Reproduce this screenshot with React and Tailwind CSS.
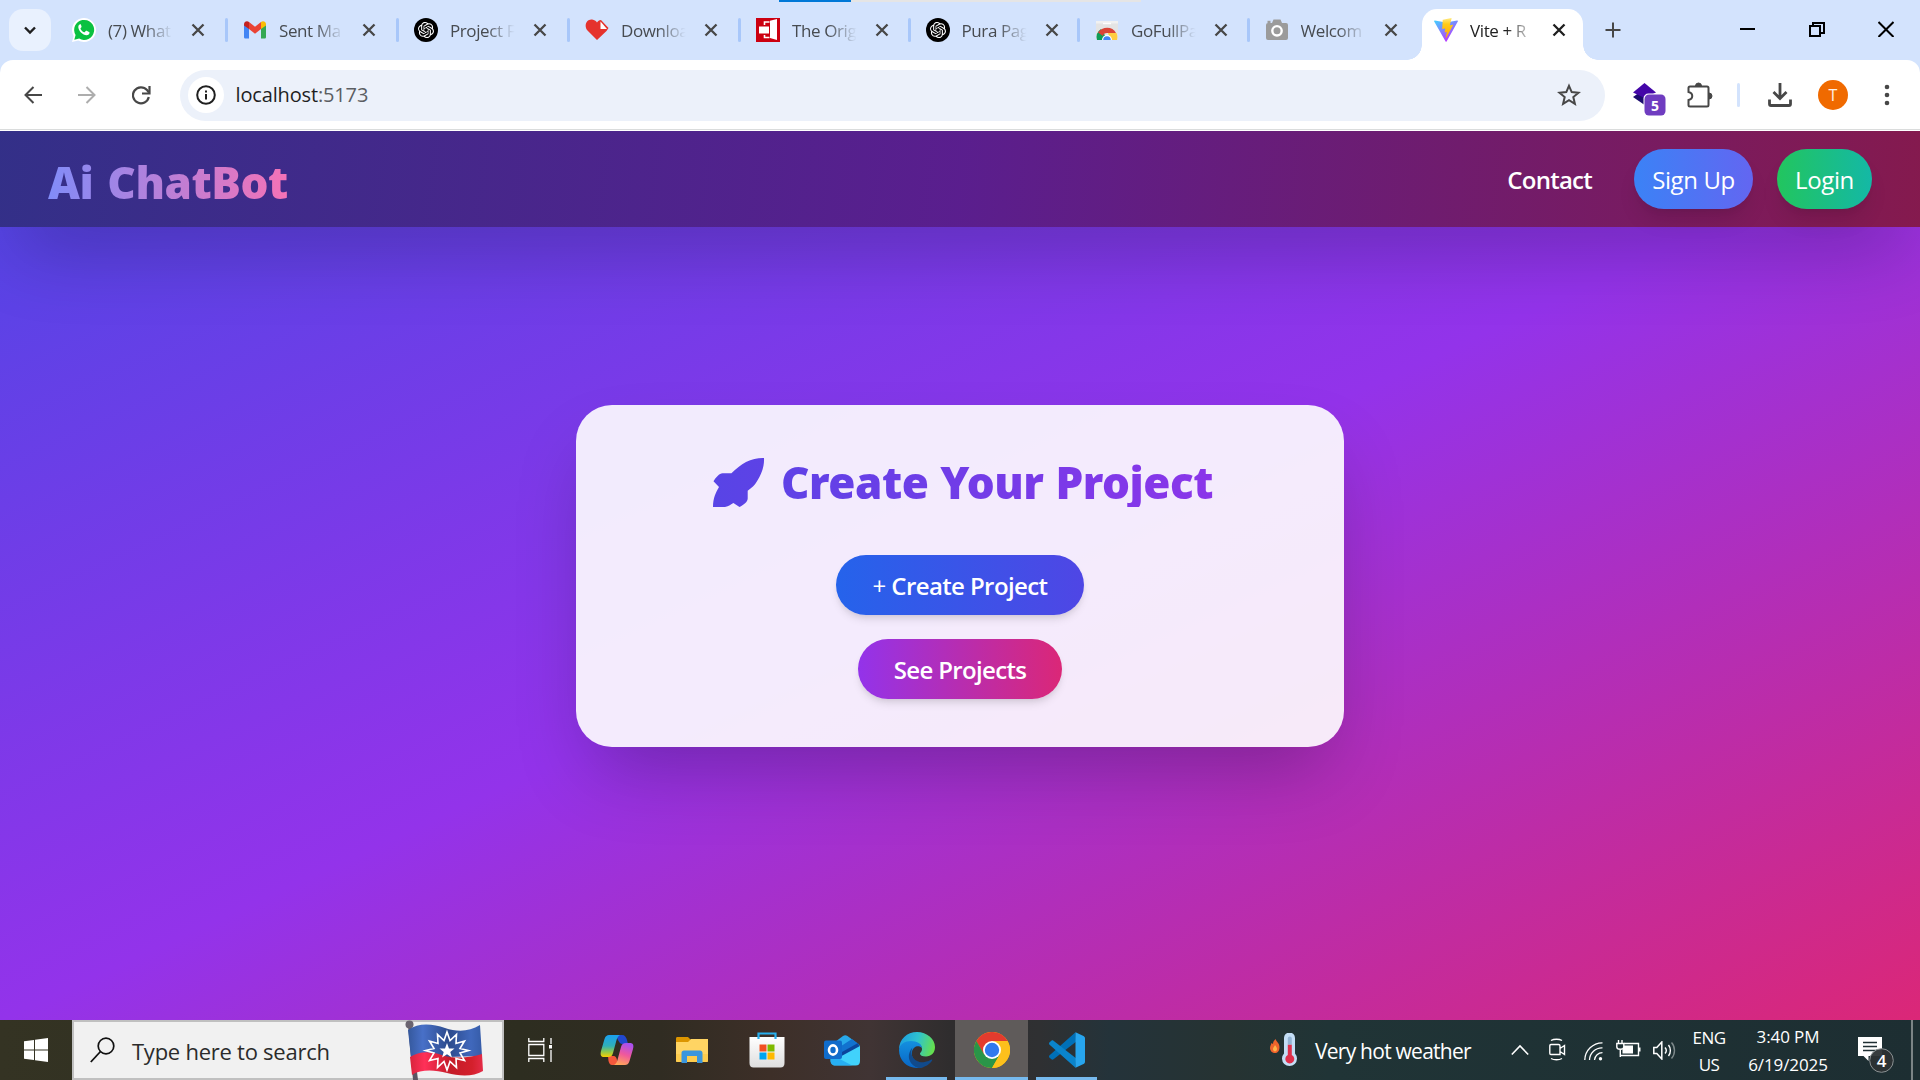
import React from "react";
import { SiOpenai } from "react-icons/si";

const WhatsApp = () => (
  <svg className="size-6" viewBox="0 0 24 24">
    <path d="M0 24l1.6-6A12 12 0 1 1 6.200 22.500z" fill="#fff" />
    <path d="M2.300 21.700l1.300-4.600A10 10 0 1 1 7.200 20.600z" fill="#0ac141" />
    <path d="M8.200 6.200c-.7 0-1.900 1-1.900 2.700 0 3.500 4.300 8.300 8.300 8.300 1.700 0 2.900-1.100 2.900-2.400 0-.5-.1-.7-.5-.9l-2.300-1.100c-.4-.2-.7-.1-1 .3l-.8 1c-.3.3-.6.3-.9.1-1.500-.7-2.700-1.900-3.400-3.300-.2-.3-.1-.6.1-.8l.7-.9c.2-.3.2-.5.1-.8L8.900 6.600c-.2-.4-.4-.4-.7-.4z" fill="#fff" />
  </svg>
);
const Gmail = () => (
  <svg className="size-6" viewBox="0 0 24 24">
    <path d="M1 6v13c0 1 .6 1.600 1.600 1.600H6V10z" fill="#4285f4" />
    <path d="M23 6v13c0 1-.6 1.600-1.600 1.600H18V10z" fill="#34a853" />
    <path d="M1 6.500C1 3.500 4 2.500 6 4v7L1 7.500z" fill="#c5221f" />
    <path d="M23 6.500C23 3.500 20 2.500 18 4v7l5-3.500z" fill="#fbbc04" />
    <path d="M6 4l6 4.800L18 4v7l-6 4.700L6 11z" fill="#ea4335" />
  </svg>
);
const ChatGpt = () => (
  <span className="flex size-6 items-center justify-center rounded-full bg-black text-white">
    <SiOpenai size={16} />
  </span>
);
const Heart = () => (
  <svg className="size-6" viewBox="0 0 24 24">
    <path d="M12 22L2.500 12.500C-2 7 2.500 0 8 1.800 10 2.300 11 3.300 12 4.500c1-1.500 2-2.300 4-2.500l7.500 8-2 3z" fill="#e5322d" />
    <path d="M15.500 3.500v7.500h6.500z" fill="#fff" />
  </svg>
);
const Door = () => (
  <svg className="size-6" viewBox="0 0 24 24">
    <path d="M0 0h24v24H0z" fill="#cc0010" />
    <path d="M14 2.800l7-1.800v21l-7-2z" fill="#fff" />
    <path d="M3 8.500h10v7H3z" fill="#fff" />
    <path d="M8.500 7V4h5M8.500 17v2.500h5" fill="none" stroke="#fff" strokeWidth="1.600" />
  </svg>
);
const WebStore = () => (
  <svg className="size-6" viewBox="0 0 24 24">
    <path d="M1 3h22v19H1z" fill="#e4e4e4" />
    <path d="M1 3h22v2.500H1z" fill="#f1f1f1" />
    <path d="M8 5.500h8" stroke="#fff" strokeWidth="1.500" />
    <path d="M2 22a10 10 0 0 1 4-11l5 8-3 3z" fill="#0f9d58" />
    <path d="M3 14.500C7 8 18 8 21 15H12c-2 0-4 1-4 3z" fill="#db4437" />
    <path d="M13 15h8.500c1 2 1 5 .5 7h-7z" fill="#ffcd40" />
    <path d="M7 22a5 5 0 0 1 10 0z" fill="#fff" />
    <path d="M8.200 22a3.800 3.800 0 0 1 7.600 0z" fill="#4285f4" />
  </svg>
);
const Camera = () => (
  <svg className="size-6" viewBox="0 0 24 24">
    <path d="M3 5h4l1.500-3.500h7L17 5h4a2 2 0 0 1 2 2v13a2 2 0 0 1-2 2H3a2 2 0 0 1-2-2V7a2 2 0 0 1 2-2z" fill="#9b9b9b" />
    <path d="M2.500 2.800h3V5h-3z" fill="#9b9b9b" />
    <circle cx="12" cy="12.800" r="4.700" fill="none" stroke="#fff" strokeWidth="2.400" />
  </svg>
);
const Vite = () => (
  <svg className="size-6" viewBox="0 0 24 24">
    <defs>
      <linearGradient id="va" x1="0" y1="0" x2=".6" y2="1">
        <stop offset="0" stopColor="#41d1ff" />
        <stop offset="1" stopColor="#bd34fe" />
      </linearGradient>
      <linearGradient id="vb" x1="0" y1="0" x2="0" y2="1">
        <stop offset="0" stopColor="#ffea83" />
        <stop offset=".3" stopColor="#ffcb1a" />
        <stop offset="1" stopColor="#ffa800" />
      </linearGradient>
    </defs>
    <path d="M23.800 3.500L12.600 23.500c-.2.400-.8.400-1 0L.200 3.500c-.3-.5.100-1 .6-.9L12 4.600l11.200-2c.5-.1.900.4.600.9z" fill="url(#va)" />
    <path d="M17.300.1L9 1.700c-.2 0-.3.200-.3.300l-.5 8.600c0 .2.200.4.400.3l2.300-.5c.2 0 .4.200.4.400l-.7 3.300c0 .2.200.4.400.4l1.400-.5c.2 0 .4.200.4.400l-1.100 5.300c-.1.300.4.500.5.200L19 7.200c.1-.2-.1-.5-.3-.4l-2.400.4c-.3 0-.4-.2-.4-.4l1.700-6.200c.1-.3-.1-.5-.3-.5z" fill="url(#vb)" />
  </svg>
);

const tabs = [
  { icon: WhatsApp, title: "(7) What" },
  { icon: Gmail, title: "Sent Ma" },
  { icon: ChatGpt, title: "Project F" },
  { icon: Heart, title: "Downloa" },
  { icon: Door, title: "The Orig" },
  { icon: ChatGpt, title: "Pura Pag" },
  { icon: WebStore, title: "GoFullPa" },
  { icon: Camera, title: "Welcom" },
  { icon: Vite, title: "Vite + R", active: true },
];

function Tab({ icon: Icon, title, active, divider, wide }) {
  return (
    <div className={"relative flex h-[60px] shrink-0 items-end " + (wide ? "w-[171px]" : "w-[169.500px]")}>
      {active && (
        <div className="absolute top-[9px] left-[3px] h-[51px] w-[161px] rounded-t-[15px] bg-white">
          <span className="absolute bottom-0 -left-[15px] size-[15px] bg-[radial-gradient(circle_at_0_0,transparent_14.500px,white_15px)]" />
          <span className="absolute -right-[15px] bottom-0 size-[15px] bg-[radial-gradient(circle_at_100%_0,transparent_14.500px,white_15px)]" />
        </div>
      )}
      <div className="relative flex h-[60px] w-full items-center pl-[15px]">
        <Icon />
        <span className={"ml-3 w-[66px] pt-[2px] text-[17px] leading-6 tracking-[-0.4px] whitespace-nowrap [mask-image:linear-gradient(to_right,black_55%,transparent_98%)] " + (active ? "text-[#1f1f1f]" : "text-[#474b50]")}>
          {title}
        </span>
        <svg className={"size-[16px] " + (active ? "ml-[15px] text-[#1f1f1f]" : "ml-[16px] text-[#474747]")} viewBox="0 0 16 16">
          <path d="M2.500 2.500l11 11M13.500 2.500l-11 11" stroke="currentColor" strokeWidth="2.300" />
        </svg>
        {divider && <span className="ml-auto h-6 w-[3px] rounded-full bg-[#a8c7fa]" />}
      </div>
    </div>
  );
}

function TabStrip() {
  return (
    <div className="relative flex h-[60px] bg-[#d3e3fd] pl-[9px]">
      <div className="absolute top-0 left-[779px] flex h-[2px]">
        <span className="w-[72px] bg-[#0078d7]" />
        <span className="w-[290px] bg-[#e5e5e5]" />
      </div>
      <div className="mt-[9px] flex h-[42px] w-[42px] shrink-0 items-center justify-center rounded-[14px] bg-[#e9f1fe]">
        <svg className="size-[14px]" viewBox="0 0 14 14">
          <path d="M2 4.500l5 5 5-5" fill="none" stroke="#1f1f1f" strokeWidth="2.400" />
        </svg>
      </div>
      <div className="ml-[6px] flex">
        {tabs.map((t, i) => (
          <Tab key={i} {...t} divider={i < 7} wide={i < 4} />
        ))}
      </div>
      <svg className="mt-[21px] ml-[15px] size-[18px]" viewBox="0 0 18 18">
        <path d="M9 1.500v15M1.500 9h15" stroke="#474747" strokeWidth="2" />
      </svg>
      <div className="mt-[21px] mr-[26px] ml-auto flex gap-[53.500px] text-black">
        <svg className="size-[15px]" viewBox="0 0 15 15"><path d="M0 8h15" stroke="currentColor" strokeWidth="2" /></svg>
        <svg className="size-[16px]" viewBox="0 0 16 16">
          <path d="M1 5h10v10H1zM4 5V2h11v10h-4" fill="none" stroke="currentColor" strokeWidth="2" />
        </svg>
        <svg className="size-[16px]" viewBox="0 0 16 16">
          <path d="M.5 1l15 15M15.500 1l-15 15" stroke="currentColor" strokeWidth="2" />
        </svg>
      </div>
    </div>
  );
}

function Toolbar() {
  return (
    <div className="bg-[#d3e3fd]">
      <div className="flex h-[71px] items-center rounded-t-[13px] border-b border-white bg-white shadow-[inset_0_-1px_0_#dadcdc]">
        <svg className="ml-[24px] size-[18px] text-[#474747]" viewBox="0 0 18 18">
          <path d="M18 9H1.500M9.500 1L1.500 9l8 8" fill="none" stroke="currentColor" strokeWidth="2" />
        </svg>
        <svg className="ml-[36px] size-[18px] text-[#adadad]" viewBox="0 0 18 18">
          <path d="M0 9h16.500M8.500 1l8 8-8 8" fill="none" stroke="currentColor" strokeWidth="2" />
        </svg>
        <svg className="ml-[36px] size-[19px] text-[#474747]" viewBox="0 0 19 19">
          <path d="M16.800 11A8 8 0 1 1 15 4l2 2.500" fill="none" stroke="currentColor" strokeWidth="2.200" />
          <path d="M17.500 0v7.500H10" fill="none" stroke="currentColor" strokeWidth="2.200" />
        </svg>
        <div className="ml-[29px] flex h-[51px] w-[1425px] items-center rounded-full bg-[#ecf1fa] pr-[24px] pl-[7.500px]">
          <span className="flex size-9 items-center justify-center rounded-full bg-white">
            <svg className="size-5" viewBox="0 0 20 20">
              <circle cx="10" cy="10" r="8.800" fill="none" stroke="#1f1f1f" strokeWidth="2" />
              <path d="M10 9v5.500M10 5.500v2" stroke="#1f1f1f" strokeWidth="2" />
            </svg>
          </span>
          <span className="ml-[12px] text-[20px] leading-7 tracking-[-0.15px] text-[#1f1f1f]">
            localhost<span className="text-[#5b5e62]">:5173</span>
          </span>
          <svg className="ml-auto size-6 text-[#474747]" viewBox="0 0 24 24">
            <path d="M12 2.800l2.700 6.300 6.800.6-5.200 4.400 1.600 6.700L12 17.200l-5.900 3.600 1.600-6.700-5.200-4.400 6.800-.6z" fill="none" stroke="currentColor" strokeWidth="2" />
          </svg>
        </div>
        <svg className="mt-[8px] ml-[27px] h-[36px] w-[35px]" viewBox="0 0 35 36">
          <path d="M1 17l13-9 11 9-11 9z" fill="#1b0a6e" transform="translate(0 -1)" />
          <path d="M1 11.500L12.500 2 24 11.500 12.500 17z" fill="#4406a8" />
          <rect x="11.500" y="12.500" width="23" height="23" rx="5" fill="#fff" />
          <rect x="12.500" y="13.500" width="21" height="21" rx="4.500" fill="#6f3cc0" />
          <text x="23" y="29.500" textAnchor="middle" fill="#fff" fontSize="14" fontWeight="700">5</text>
        </svg>
        <svg className="ml-[19px] size-[27px]" viewBox="0 0 27 27">
          <path d="M4 4.500h17a1.500 1.500 0 0 1 1.500 1.500v17a1.500 1.500 0 0 1-1.500 1.500H4A1.500 1.500 0 0 1 2.500 23v-5c5-1 5-7 0-8V6A1.500 1.500 0 0 1 4 4.500z" fill="none" stroke="#474747" strokeWidth="2" />
          <path d="M9.500 4a3 3 0 0 1 6 0zM23 11a3 3 0 0 1 0 6z" fill="#474747" stroke="#474747" />
        </svg>
        <span className="ml-[24px] h-6 w-[3px] rounded-full bg-[#d3e3fd]" />
        <svg className="ml-[28px] size-6" viewBox="0 0 24 24">
          <path d="M12 0v15M5.500 9l6.500 6.500L18.500 9" fill="none" stroke="#474747" strokeWidth="2.800" />
          <path d="M1.500 16.500v4.500a1.500 1.500 0 0 0 1.500 1.500h18a1.500 1.500 0 0 0 1.500-1.500v-4.500" fill="none" stroke="#474747" strokeWidth="2.800" />
        </svg>
        <span className="ml-[26px] flex size-[30px] items-center justify-center rounded-full bg-[#f06a00] text-[16px] leading-none text-white/90">T</span>
        <svg className="ml-[36px] h-6 w-[6px]" viewBox="0 0 6 24">
          <circle cx="3" cy="4" r="2.300" fill="#474747" />
          <circle cx="3" cy="12" r="2.300" fill="#474747" />
          <circle cx="3" cy="20" r="2.300" fill="#474747" />
        </svg>
      </div>
    </div>
  );
}

function Navbar() {
  return (
    <nav className="relative flex h-24 items-center justify-between bg-[linear-gradient(to_right,#312e81ed,#581c87ed,#831843ed)] px-12 shadow-[0_37.500px_75px_-18px_rgba(0,0,0,0.25)]">
      <h1 className="bg-[linear-gradient(to_right,#818cf8,#f472b6)] bg-clip-text pt-[5px] font-['Noto_Sans'] text-[44px] leading-[54px] font-black tracking-[-0.45px] whitespace-nowrap text-transparent [word-spacing:3px]">
        Ai ChatBot
      </h1>
      <div className="flex items-center gap-6 text-2xl text-white">
        <a className="mr-[18px] pt-[2px] text-[24px] font-semibold tracking-[-0.75px]">Contact</a>
        <button className="flex h-[60px] w-[119px] items-center justify-center rounded-full bg-[linear-gradient(to_right,#3b82f6,#6366f1)] pt-[2px] text-[24px] tracking-[-0.4px] shadow-[0_15px_22px_-4.500px_rgba(0,0,0,0.1),0_6px_9px_-6px_rgba(0,0,0,0.1)]">Sign Up</button>
        <button className="flex h-[60px] w-[95px] items-center justify-center rounded-full bg-[linear-gradient(to_right,#22c55e,#14b8a6)] pt-[2px] text-[24px] tracking-[-0.4px] shadow-[0_15px_22px_-4.500px_rgba(0,0,0,0.1),0_6px_9px_-6px_rgba(0,0,0,0.1)]">Login</button>
      </div>
    </nav>
  );
}

function ProjectCard() {
  return (
    <div className="h-[342px] w-[768px] rounded-[36px] bg-white/90 p-12 shadow-[0_37.500px_75px_-18px_rgba(0,0,0,0.25)]">
      <h2 className="flex h-[54px] justify-start bg-[linear-gradient(to_right,#4f46e5,#9333ea)] bg-clip-text pl-[89px] font-['Noto_Sans'] text-[44px] leading-[58px] font-black whitespace-nowrap text-transparent">
        <svg className="mr-[14px] h-[54px] w-[54px] shrink-0" viewBox="0 0 54 54">
          <defs>
            <linearGradient id="rocket" x1="0" x2="1" y1="0" y2="0">
              <stop offset="0" stopColor="#5844e6" />
              <stop offset="1" stopColor="#5d42e6" />
            </linearGradient>
          </defs>
          <path d="M51 5C45 4.800 39 6 33 9c-5 2.800-10 6.500-14.600 11.300H9.500c-3 0-7 4.500-9 8L6 34c-3 5-6 11-6 20h12c4-1 6-2.500 8.400-4l6.100 4c4-2 8.200-5 8.200-8.500v-7.800c4-3 7-5.500 9-9C48 22 51.500 14 51 5z" fill="url(#rocket)" />
        </svg>
        <span className="tracking-[-0.5px] [word-spacing:1px]">Create Your Project</span>
      </h2>
      <div className="mt-12 flex flex-col items-center gap-6 text-[24px] font-semibold text-white">
        <button className="h-[60px] w-[248px] rounded-full bg-[linear-gradient(to_right,#2563eb,#4f46e5)] pt-[2px] tracking-[-0.6px] shadow-[0_6px_9px_-1.500px_rgba(0,0,0,0.1),0_3px_6px_-3px_rgba(0,0,0,0.1)]"><span className="font-normal">+</span> Create Project</button>
        <button className="h-[60px] w-[204px] rounded-full bg-[linear-gradient(to_right,#9333ea,#db2777)] pt-[2px] tracking-[-0.65px] shadow-[0_6px_9px_-1.500px_rgba(0,0,0,0.1),0_3px_6px_-3px_rgba(0,0,0,0.1)]">See Projects</button>
      </div>
    </div>
  );
}

const Copilot = () => (
  <svg className="h-[32px] w-[36px]" viewBox="0 0 36 32">
    <defs>
      <linearGradient id="c1" x1="0" y1="0" x2="0" y2="1">
        <stop offset="0" stopColor="#1aa0f0" />
        <stop offset=".5" stopColor="#30b0b8" />
        <stop offset=".75" stopColor="#8cc850" />
        <stop offset="1" stopColor="#f8d000" />
      </linearGradient>
      <linearGradient id="c2" x1=".6" y1="0" x2=".3" y2="1">
        <stop offset="0" stopColor="#a850f0" />
        <stop offset=".5" stopColor="#f0589c" />
        <stop offset="1" stopColor="#ffa858" />
      </linearGradient>
    </defs>
    <path d="M17 1h6c3 0 4 2 5 5l1 4h-6c-2 0-4-3-6-9z" fill="#2148cf" />
    <path d="M18 31h-5c-2 0-3-2-3.500-4L9 22h6c2 0 4 4 3 9z" fill="#f4583c" />
    <path d="M10 1h11c-2 1-3 3-4 7l-3 11c-1 3-2 4-5 4H5c-3 0-4-2-3-6L5.500 5C6.500 2 8 1 10 1z" fill="url(#c1)" />
    <path d="M26 31H15c2-1 3-3 4-7l3-11c1-3 2-4 5-4h4c3 0 4 2 3 6l-3.500 12C29.500 30 28 31 26 31z" fill="url(#c2)" />
  </svg>
);
const Explorer = () => (
  <svg className="h-[28px] w-[32px]" viewBox="0 0 32 28">
    <path d="M0 2.500C0 1.500.5 1 1.500 1H12l3 3v4H0z" fill="#dc9500" />
    <path d="M0 6h12l3-3h17v22a1 1 0 0 1-1 1H1a1 1 0 0 1-1-1z" fill="#ffd463" />
    <path d="M0 18h32v7a1 1 0 0 1-1 1H1a1 1 0 0 1-1-1z" fill="#fbc741" opacity=".6" />
    <path d="M5.500 27V17c0-1.500 1-2.500 2.500-2.500h16c1.500 0 2.500 1 2.500 2.500v10H21v-7H11v7z" fill="#3a96dd" />
  </svg>
);
const Store = () => (
  <svg className="h-[36px] w-[36px]" viewBox="0 0 36 36">
    <defs>
      <linearGradient id="st" x1="0" y1="0" x2="0" y2="1">
        <stop offset="0" stopColor="#fff" />
        <stop offset="1" stopColor="#dedede" />
      </linearGradient>
    </defs>
    <path d="M.5 5h35v26c0 3-1.500 4.500-4 4.500h-27c-2.500 0-4-1.500-4-4.500z" fill="url(#st)" />
    <path d="M9.500 7V1.500h17V7" fill="none" stroke="#28b0ee" strokeWidth="2.200" />
    <path d="M10.500 12.500h7v7h-7z" fill="#f25022" />
    <path d="M18.500 12.500h7v7h-7z" fill="#7fba00" />
    <path d="M10.500 20.500h7v7h-7z" fill="#00a4ef" />
    <path d="M18.500 20.500h7v7h-7z" fill="#ffb900" />
  </svg>
);
const Outlook = () => (
  <svg className="h-[32px] w-[36px]" viewBox="0 0 36 32">
    <path d="M7 11L19 2c1.500-1 3-1 4.500 0L35.500 11v10L22 27 7 21z" fill="#28a8ea" />
    <path d="M14 14L28 5l6.500 5L17 23z" fill="#1272cf" />
    <path d="M18 18l16-9 2 5-18 9z" fill="#0b459c" />
    <path d="M6.500 22h11L36 12v15c0 3-1.500 4.500-4.500 4.500h-20c-3 0-5-2-5-5z" fill="#41d2fb" />
    <path d="M6.500 20L28 31.500H11.500c-3 0-5-2-5-5z" fill="#1ca0ee" opacity=".7" />
    <rect y="6.500" width="18" height="18.500" rx="2" fill="#106ccb" />
    <ellipse cx="9" cy="16" rx="4" ry="4.600" fill="none" stroke="#fff" strokeWidth="2.600" />
  </svg>
);
const Edge = () => (
  <svg className="size-[36px]" viewBox="0 0 36 36">
    <defs>
      <linearGradient id="e1" x1="0" y1=".3" x2="1" y2=".5">
        <stop offset="0" stopColor="#1b9de2" />
        <stop offset=".5" stopColor="#2fc3cf" />
        <stop offset="1" stopColor="#66e04c" />
      </linearGradient>
      <linearGradient id="e2" x1="0" y1="0" x2="0" y2="1">
        <stop offset="0" stopColor="#1490df" />
        <stop offset="1" stopColor="#0866c6" />
      </linearGradient>
    </defs>
    <path d="M0 18C0 7 8 0 18 0s18 7 18 15c0 6-4 9.500-9 9.500-4 0-6-1.500-6-2.800 0-1.200 2-1.700 2-4.700 0-4-4-7-9-7C7 10 1 13 0 18z" fill="url(#e1)" />
    <path d="M0 18C.5 12 6 9 12 9c6 0 11 3 11 7-3-3-9-2-10 4-1 7 4 12 11 15.000C11 39 0 30 0 18z" fill="url(#e2)" />
    <path d="M13.500 15.500c-4 9 4 16 12 14.500 3-.5 5-1.500 7-2.500.6-.3 1 .2.700.7C31 32 26 35.500 20 36 11 34 6 24 13.500 15.500z" fill="#114a8b" />
  </svg>
);
const Chrome = () => (
  <svg className="size-[36px]" viewBox="0 0 36 36">
    <circle cx="18" cy="18" r="18" fill="#fbbc05" />
    <path d="M18 18H33.600A18 18 0 0 0 2.400 9L10.200 22.500z" fill="#e33b2e" />
    <path d="M18 9H33.600A18 18 0 0 0 2.400 9L10.200 22.500z" fill="#e33b2e" />
    <path d="M2.400 9A18 18 0 0 0 18 36L25.800 22.500 18 18l-7.800 4.500z" fill="#2a9548" />
    <path d="M18 9H33.600A18 18 0 0 1 18 36L25.800 22.500z" fill="#fdc01c" />
    <circle cx="18" cy="18" r="9" fill="#fff" />
    <circle cx="18" cy="18" r="7.200" fill="#3079ed" />
  </svg>
);
const VsCode = () => (
  <svg className="size-[36px]" viewBox="0 0 36 36">
    <path d="M26.500.2L27 9.800 4.500 27.300c-.7.500-1.500.5-2.100 0L.6 25.700c-.8-.7-.8-1.800 0-2.500z" fill="#0070b8" />
    <path d="M26.500 35.800L27 26.200 4.500 8.700c-.7-.5-1.500-.5-2.100 0L.6 10.300c-.8.700-.8 1.800 0 2.500z" fill="#0a84cc" />
    <path d="M26.500.2L34.500 4c.9.400 1.500 1.300 1.500 2.300v23.400c0 1-.6 1.900-1.500 2.300l-8 3.800z" fill="#27a5ee" />
  </svg>
);

const apps = [
  { icon: Copilot },
  { icon: Explorer },
  { icon: Store },
  { icon: Outlook },
  { icon: Edge, bar: "w-[61px]" },
  { icon: Chrome, bar: "w-[73px]", active: true },
  { icon: VsCode, bar: "w-[61px]" },
];

const Flag = () => (
  <svg className="h-[60px] w-[80px]" viewBox="0 0 80 60">
    <defs>
      <linearGradient id="fb" x1="0" x2="1" y1="0" y2="0">
        <stop offset="0" stopColor="#35589c" />
        <stop offset=".2" stopColor="#4870c8" />
        <stop offset=".55" stopColor="#2c4a8c" />
        <stop offset=".85" stopColor="#4068bc" />
        <stop offset="1" stopColor="#365ca8" />
      </linearGradient>
      <linearGradient id="fr" x1="0" x2="1" y1="0" y2="0">
        <stop offset="0" stopColor="#d8243c" />
        <stop offset=".2" stopColor="#ff3058" />
        <stop offset=".55" stopColor="#c41c28" />
        <stop offset=".85" stopColor="#d4202c" />
        <stop offset="1" stopColor="#e42c48" />
      </linearGradient>
    </defs>
    <path d="M3 5l5 55h5L6 5z" fill="#5b5562" />
    <circle cx="4.500" cy="4.500" r="4" fill="#6b6470" />
    <path d="M3 10C14 2 28 4 40 8s24 4 35-3l2 31-71 2z" fill="url(#fb)" />
    <path d="M5 37c9-6 20-6 32-2s28 3 40-1l1 17c-10 6-24 5-36 2s-26-4-35 2z" fill="url(#fr)" />
    <path d="M42 12l3 8.500 6.500-6-.5 9 8.500-2.500-4.500 7.500 8.500 2-8.500 2.500 4.500 7.500-8.500-2 .5 9-6.500-6-3 8.500-3-8.500-6.500 6 .5-9-8.500 2 4.500-7.500-8.500-2.500 8.500-2-4.500-7.500 8.500 2.500-.5-9 6.500 6z" fill="none" stroke="#fff" strokeWidth="1.600" />
    <path d="M42 23l2 5.500h5.500l-4.200 3.500 1.600 5.500-4.900-3.200-4.900 3.200 1.600-5.500-4.200-3.500H40z" fill="#fff" />
  </svg>
);

function Taskbar() {
  return (
    <div className="flex h-[60px] bg-[linear-gradient(to_right,#343323_0px,#2d2d20_520px,#302c22_660px,#3d2f28_770px,#403434_870px,#2f2d2e_950px,#2f3032_1040px,#24333a_1110px,#263332_1230px,#203436_1330px,#1d2e32_1920px)] text-white">
      <div className="flex w-[72px] items-center justify-center">
        <svg className="size-6" viewBox="0 0 24 24">
          <path d="M0 3.300L10 2v9.500H0zM11 1.800L24 0v11.500H11zM0 12.500h10V22L0 20.700zM11 12.500h13V24L11 22.200z" fill="#fff" />
        </svg>
      </div>
      <div className="flex w-[432px] items-center border-2 border-[#c0c0c0] bg-[#f1f1f1] pl-[16px]">
        <svg className="h-[26px] w-[25px]" viewBox="0 0 25 26">
          <circle cx="16" cy="9" r="7.800" fill="none" stroke="#111" strokeWidth="1.700" />
          <path d="M10.500 14.500L.8 25" stroke="#111" strokeWidth="1.800" />
        </svg>
        <span className="ml-[17px] pt-[1px] text-[22px] leading-7 tracking-[-0.25px] whitespace-nowrap text-[#2b2b2b]">Type here to search</span>
        <span className="mr-[17px] ml-auto flex"><Flag /></span>
      </div>
      <div className="flex w-[75px] items-center pl-6">
        <svg className="size-6" viewBox="0 0 24 24">
          <path d="M.8 0v3.500h15V0M.8 24v-3.500h15V24M.8 6.500h15v11H.8zM23 0v6M23 12v12" fill="none" stroke="#fff" strokeWidth="1.300" />
          <path d="M21 7h3v3.500h-3z" fill="#fff" />
        </svg>
      </div>
      {apps.map(({ icon: Icon, bar, active }, i) => (
        <div key={i} className="flex w-[75px] justify-center">
          <div className={"relative flex h-full w-[73px] items-center justify-center " + (active ? "bg-[#5f5b5a]" : "")}>
            <Icon />
            {bar && <span className={"absolute bottom-0 h-[3px] bg-[#76b9ed] " + bar} />}
          </div>
        </div>
      ))}
      <div className="mr-[7px] ml-auto flex items-center">
        <svg className="h-[34px] w-[28px]" viewBox="0 0 28 34">
          <path d="M5.500 6c1 3 4 4 4 8s-2 6-4.500 6S0 18 0 15c0-2 1-3 1.500-5l1.500 1c0-2 1-3.500 2.500-5z" fill="#f0642c" />
          <path d="M5 12c1 1.500 2 2.500 2 4s-1 2.500-2 2.500-2-1-2-2.500 1.500-2.500 2-4z" fill="#ffb44a" />
          <path d="M14 5a5.500 5.500 0 0 1 11 0v15.500a7.500 7.500 0 1 1-11 0z" fill="#c4def6" />
          <path d="M17.800 11.500h4V22a4.500 4.500 0 1 1-4 0z" fill="#e0304c" />
          <path d="M17.800 5.500a2 2 0 0 1 4 0v6h-4z" fill="#93b4d4" />
        </svg>
        <span className="ml-[17px] w-[160px] pt-[2px] text-[21px] leading-7 tracking-[-0.75px] whitespace-nowrap">Very hot weather</span>
        <svg className="ml-[36px] h-[12px] w-[18px]" viewBox="0 0 18 12">
          <path d="M.8 10.500L9 2l8.200 8.500" fill="none" stroke="#fff" strokeWidth="1.600" />
        </svg>
        <svg className="ml-[20px] h-[24px] w-[17px]" viewBox="0 0 17 24">
          <path d="M2 6.500h7.500a1.500 1.500 0 0 1 1.500 1.500v8.500H2A1.300 1.300 0 0 1 .8 15.200V7.800A1.300 1.300 0 0 1 2 6.500zM11 10.500l4.500-3v9l-4.500-3M2 2.500C5 .8 10 .8 13 2.500M2 20.500c3 1.700 8 1.700 11 0" fill="none" stroke="#fff" strokeWidth="1.400" />
        </svg>
        <svg className="mt-[2px] ml-[18px] size-[19px]" viewBox="0 0 19 19">
          <path d="M.8 18A17.500 17.500 0 0 1 18.500.8M5.500 18A12.500 12.500 0 0 1 18.500 5.800M10.500 18a8 8 0 0 1 8-7.300" fill="none" stroke="#fff" strokeWidth="1.300" />
          <circle cx="16.500" cy="16.800" r="1.700" fill="#fff" />
        </svg>
        <svg className="mb-[2px] ml-[13px] h-[18px] w-[25px]" viewBox="0 0 25 18">
          <path d="M8 3.500h14.500v12H5" fill="none" stroke="#fff" strokeWidth="1.400" />
          <path d="M23 7.500h1.500v4H23z" fill="#fff" />
          <path d="M8 5.500h9v8H6.500V10z" fill="#fff" />
          <path d="M2.500 0v3M6 0v3M.8 3.500h7V7c0 3-7 3-7 0zM4.300 10v7" fill="none" stroke="#fff" strokeWidth="1.400" />
        </svg>
        <svg className="ml-[12px] h-[19px] w-[23px]" viewBox="0 0 23 19">
          <path d="M.8 6.500v6h3l5 5.500V1L3.800 6.500z" fill="none" stroke="#fff" strokeWidth="1.500" />
          <path d="M12 6.500c1.500 1.700 1.500 4.300 0 6M15.500 4c2.500 3 2.500 8 0 11" fill="none" stroke="#fff" strokeWidth="1.400" />
          <path d="M18.500 1.500c4 4.500 4 11.500 0 16" fill="none" stroke="#7e898b" strokeWidth="1.400" />
        </svg>
        <div className="ml-[8px] flex w-[50px] flex-col items-center pt-[2px] text-[17px] leading-[27px] tracking-[-0.6px]">
          <span>ENG</span>
          <span>US</span>
        </div>
        <div className="ml-[7px] flex w-[94px] flex-col items-center pt-[1px] text-[17px] leading-[27.500px] tracking-[-0.1px] whitespace-nowrap">
          <span>3:40 PM</span>
          <span>6/19/2025</span>
        </div>
        <svg className="mt-[8px] ml-[22px] h-[40px] w-[37px]" viewBox="0 0 37 40">
          <path d="M1 3h24v19H15l-3.500 0v5L6.500 22H1z" fill="#fff" />
          <path d="M6 8.500h14M6 12.500h14M6 16.500h14" stroke="#203034" strokeWidth="1.300" />
          <circle cx="24.500" cy="26.500" r="11.800" fill="#2c3134" fillOpacity=".95" stroke="#8a9092" strokeWidth="1" />
          <text x="24.500" y="32.500" textAnchor="middle" fill="#fff" fontSize="17" fontWeight="600">4</text>
        </svg>
        <span className="ml-[17px] h-[60px] w-[2px] bg-[#7b8486]" />
      </div>
    </div>
  );
}

export default function App() {
  return (
    <div className="flex h-[1080px] w-[1920px] flex-col overflow-hidden font-['Open_Sans','Noto_Sans',sans-serif]">
      <TabStrip />
      <Toolbar />
      <main className="flex flex-1 flex-col overflow-hidden bg-[linear-gradient(to_bottom_right,#4f46e5,#9333ea,#db2777)]">
        <Navbar />
        <div className="flex flex-1 justify-center pt-[178px]">
          <ProjectCard />
        </div>
      </main>
      <Taskbar />
    </div>
  );
}
